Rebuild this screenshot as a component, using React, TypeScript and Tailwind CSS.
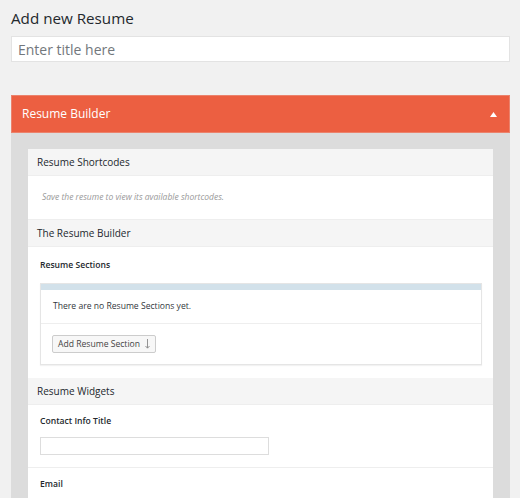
import React from "react";

const font = { fontFamily: '"Open Sans", "Noto Sans", sans-serif' };

function SectionHeader({ title }: { title: string }) {
  return (
    <div className="h-[27px] flex items-center px-[9px] bg-[#f5f5f5] border-b border-[#eeeeee] text-[10px] text-[#23282d]">
      {title}
    </div>
  );
}

export default function App() {
  return (
    <div className="w-[520px] h-[498px] overflow-hidden bg-[#f1f1f1]" style={font}>
      <div className="px-[11px] pt-[6px]">
        <h1 className="text-[15.2px] leading-[24px] text-[#23282d]">Add new Resume</h1>
        <div className="mt-[6px] w-[499px] h-[26px] bg-white border border-[#e3e3e3] flex items-center px-[6px]">
          <span className="text-[14px] text-[#72777c]">Enter title here</span>
        </div>

        {/* Resume Builder metabox */}
        <div className="mt-[33px] w-[499px]">
          <div className="h-[38px] bg-[#ec5f41] border border-[#eb826c] flex items-center justify-between pl-[10px] pr-[12px]">
            <span className="text-[12px] text-white">Resume Builder</span>
            <svg width="7" height="5" viewBox="0 0 7 5">
              <path d="M3.5 0 L7 5 L0 5 Z" fill="#ffffff" />
            </svg>
          </div>

          <div className="bg-[#dcdcdc] px-[17px] pt-[16px] h-[400px]">
            <div className="bg-white">
              <SectionHeader title="Resume Shortcodes" />
              <div className="h-[44px] flex items-center px-[14px] border-b border-[#eeeeee]">
                <span className="text-[8.5px] italic text-[#999999]">
                  Save the resume to view its available shortcodes.
                </span>
              </div>

              <SectionHeader title="The Resume Builder" />
              <div className="px-[12px] pt-[11px] pb-[13px]">
                <div className="text-[8.6px] font-semibold text-[#23282d] leading-[14px]">Resume Sections</div>
                <div className="mt-[11px] w-[442px] border border-[#e5e5e5] shadow-[0_1px_1px_rgba(0,0,0,0.05)]">
                  <div className="h-[6px] bg-[#d2e1ea]" />
                  <div className="h-[34px] flex items-center px-[12px] border-b border-[#eeeeee]">
                    <span className="text-[8.6px] text-[#32373c]">There are no Resume Sections yet.</span>
                  </div>
                  <div className="h-[40px] flex items-center px-[11px]">
                    <div className="h-[18px] flex items-center px-[5px] border border-[#cccccc] bg-[#f7f7f7] rounded-[2px] text-[8.6px] text-[#444444]">
                      Add Resume Section
                      <svg className="ml-[5px]" width="5" height="10" viewBox="0 0 5 10">
                        <path d="M2.5 0 V9 M0.5 7 L2.5 9.2 L4.5 7" stroke="#888888" strokeWidth="0.9" fill="none" />
                      </svg>
                    </div>
                  </div>
                </div>
              </div>

              <SectionHeader title="Resume Widgets" />
              <div className="px-[12px] pt-[9px] pb-[12px] border-b border-[#eeeeee]">
                <div className="text-[8.6px] font-semibold text-[#23282d] leading-[14px]">Contact Info Title</div>
                <div className="mt-[9px] w-[229px] h-[18px] bg-white border border-[#dddddd]" />
              </div>
              <div className="px-[12px] pt-[9px] pb-[12px]">
                <div className="text-[8.6px] font-semibold text-[#23282d] leading-[14px]">Email</div>
              </div>
            </div>
          </div>
        </div>
      </div>
    </div>
  );
}
